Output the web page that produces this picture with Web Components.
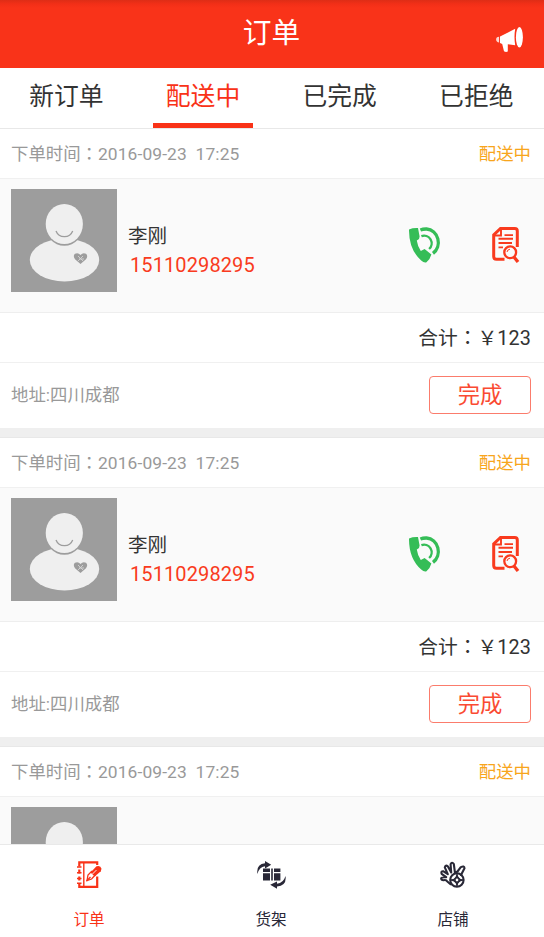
<!DOCTYPE html>
<html lang="zh-CN">
<head>
<meta charset="utf-8">
<title>订单</title>
<style>
html,body{margin:0;height:937px;overflow:hidden;background:#fff}
body{font-family:Roboto,"Noto Sans CJK SC",sans-serif;color:#333}
</style>
</head>
<body>
<order-app></order-app>
<script>
const define = (name, html) => customElements.define(name, class extends HTMLElement {
  constructor() {
    super();
    const t = document.createElement('template');
    t.innerHTML = html;
    this.attachShadow({mode: 'open'}).append(t.content.cloneNode(true));
  }
});

const icons = {
  horn: `<svg width="28" height="26" viewBox="0 0 28 26" fill="#fff"><path d="M4 9.5 19.2 1.8Q17.8 10 19.2 18.2L11.8 17.2V24.5Q10 25.5 8 24.3L6.2 17 4 16Z"/><path d="M3.1 9.8Q0 10 .1 12.6T3.1 15.6Z" opacity=".8"/><ellipse cx="23.4" cy="10.2" rx="3.5" ry="10.2"/></svg>`,
  phone: `<svg width="32" height="36" viewBox="0 0 32 36"><path d="M0 2.4Q4 .8 9 1.1L10.6 9.6 10 12 7.8 13.4Q8.4 18.5 11.8 24L15.6 22 22.4 27.6Q21.3 32 17.5 35.2Q15 36 12.2 33.5Q-.2 22.5 0 2.4Z" fill="#35bd57"/><g fill="none" stroke="#35bd57"><path d="M11.4 3Q14 1.9 17.6 2A12.8 13.5 0 0 1 24 26.4" stroke-width="3.3"/><path d="M12.4 9.2A7.6 7.6 0 0 1 20.1 22" stroke-width="2.3"/></g></svg>`,
  detail: `<svg width="28" height="36" viewBox="0 0 28 36" fill="none" stroke="#f93a1e"><path d="M25.3 20V4Q25.3 1.5 22.8 1.5H8.5L1.7 8V29.6Q1.7 32.3 4.5 32.3H12.5" stroke-width="3"/><path d="M9 2V8.5H2M12.5 8.1H21M6.5 11.8H21M6.5 16H20M6.5 20.4H11" stroke-width="1.9"/><circle cx="18.2" cy="25.3" r="5.9" stroke-width="2.3"/><path d="M22 30 26 35" stroke-width="3.3"/><path d="M15 25Q15.3 22.5 18 22.2" stroke-width="1"/></svg>`,
  orders: `<svg width="25" height="28" viewBox="0 0 25 28" fill="none" stroke="#f93217"><path d="M20.2 15.5V25.8H2.3V22M2.3 19.5V15.5M2.3 12.5V8.5M2.3 5.5V1.4H20.2V4" stroke-width="2.2"/><path d="M6.8 2V25M0 6H4.5M0 11.8H4.5M0 17.5H4.5M0 22.3H4.5" stroke-width="1.4"/><path d="M10 19.5 11 14 14.5 10.5 18 14.2 14.6 18Z" stroke-width="1.3"/><path d="M13.5 11.5 19.5 5.3Q23.5 3.8 24.5 7.8L23.8 10.2 17.7 15.5Z" fill="#f93217" stroke="none"/><path d="M15 13.5 19.5 9" stroke="#fff" stroke-width=".9"/><path d="M9.5 20 13.5 16" stroke-width="1.4"/></svg>`,
  shelf: `<svg width="29" height="28" viewBox="0 0 29 28" fill="#292837"><path d="M.4 13Q-.9 3 8 2.3V0L14.2 3.8 8 7.4V5.3Q2.2 6 .4 13ZM28.5 15Q29.9 25 20 25.5V27.7L13.2 23.7 20 20.5V22.7Q26.5 22 28.5 15Z"/><path d="M6 7.5H13V11H6ZM14.2 7.5H15.8V19.5H14.2ZM17 7.5H23.4V11H17ZM6 12.2H13V19.5H6ZM17 12.2H23.4V19.5H17Z"/></svg>`,
  shop: `<svg width="26" height="28" viewBox="0 0 26 28" fill="none" stroke="#292837" stroke-width="2.1" stroke-linecap="round" stroke-linejoin="round"><path d="M10.5 23.2 7 20.2Q6.5 18.6 3.5 19.2 1 19 1.2 17.2 1.7 16 6.2 16.2L1.6 12.8Q.8 9.8 3.5 10.3L7.8 13.2 4.8 6.4Q5.5 3.6 7.8 5.3L11.2 11.5 10.6 3.3Q12 .3 13.8 3L15 11.8 17.5 10.5 20.8 6.1Q24.4 4.5 24.5 7.2L21 14"/><circle cx="16.9" cy="18.9" r="6.7"/><path d="M17 13Q16.8 18.7 11 19 16.8 19.2 17 25 17.2 19.2 23 19 17.2 18.7 17 13Z" stroke-width="1.3"/><circle cx="17" cy="19" r="2.2" stroke-width="1.6"/></svg>`
};
for (const [k, v] of Object.entries(icons))
  define('icon-' + k, `<style>:host{display:block;line-height:0}svg{display:block}</style>${v}`);

define('title-bar', `<style>
:host{display:grid;grid-template-columns:1fr auto 1fr;height:68px;background:linear-gradient(#de2d16,#f22f17 4px,#f93319 8px);color:#fff}
.t{grid-column:2;font-size:28.7px;line-height:66px;margin-right:1px}
icon-horn{justify-self:end;margin:27px 20px 0 0}
</style><div class="t"><slot></slot></div><icon-horn></icon-horn>`);

define('tab-item', `<style>
:host{display:flex;flex-direction:column;align-items:center;width:136.67px;flex:none;height:60px;color:#333;font-size:24.8px;line-height:57px;box-sizing:border-box}
.l{height:55px}
:host([active]){color:#f93217}
:host([active]) i{width:100px;height:5px;background:#f93217}
</style><div class="l"><slot></slot></div><i></i>`);
define('tab-strip', `<style>:host{display:flex;height:60px;background:#fff;margin-left:-2px}</style><slot></slot>`);

define('user-avatar', `<style>:host{display:block;width:106px;height:103px}svg{display:block}</style>
<svg width="106" height="103" viewBox="0 0 106 103"><path d="M0 0H106V103H0Z" fill="#9d9d9d"/>
<ellipse cx="53.5" cy="71" rx="34.7" ry="21.5" fill="#efefef"/><ellipse cx="53.3" cy="35.2" rx="19.5" ry="21.6" fill="#9d9d9d"/><ellipse cx="53.3" cy="35" rx="18.6" ry="20" fill="#efefef"/>
<path d="M45 42Q47.2 47.6 53.3 47.7T61.7 42" fill="none" stroke="#9d9d9d" stroke-width="1.3"/>
<path d="M69.5 75 64 70.2Q61.6 66.5 64 64.8 67 63 69.5 66 72 63 75 64.8 77.4 67 75 70.2Z" fill="#9d9d9d"/><path d="M67 67 72 72M72 67 67 72M68 70H73" stroke="#d4d4d4" stroke-width=".9"/></svg>`);

define('done-button', `<style>:host{display:block}
button{display:block;width:102px;height:38px;box-sizing:border-box;padding:0;border:1.5px solid #fb7c6c;border-radius:4px;background:#fff;color:#fa4a32;font:22.3px/37px Roboto,"Noto Sans CJK SC",sans-serif}
</style><button><slot></slot></button>`);

define('order-card', `<style>
:host{display:block;border-top:1px solid #e8e8e8;border-bottom:9px solid #efefef;background:#fff}
:host([partial]) .rest,:host([partial]) .who,:host([partial]) icon-phone,:host([partial]) icon-detail{display:none}
.row{display:flex;justify-content:space-between;height:49px;line-height:49px;padding:0 13px 0 11px;border-bottom:1px solid #f0f0f0;white-space:pre}
.c{font-family:"Noto Sans CJK TC",sans-serif}
.time{color:#999;font-size:17.4px}
.time>:first-child{line-height:47px}
.time>.st{color:#f8a51c;line-height:50px}
.person{display:flex;height:133px;background:#fafafa;border-bottom:1px solid #eee}
user-avatar{margin:10px 0 0 11px}
.who{margin:43px 0 0 11px;flex:1}
.name{font-size:19.5px;line-height:30px}
.tel{font-size:20px;line-height:26px;color:#f93a20;letter-spacing:.1px;padding-left:2px}
icon-phone{margin:48px 51px 0 0}
icon-detail{margin:48px 24px 0 0}
.sum{justify-content:flex-end;font-size:19.8px;line-height:47px}
.n{letter-spacing:.1px}
.addr{height:65px;line-height:65px;align-items:flex-start;border:0;color:#999;font-size:17.4px}
done-button{margin-top:13px}
</style>
<div class="row time"><span>下单时间<span class="c" lang="zh-TW">：</span><span class="n">2016-09-23  17:25</span></span><span class="st">配送中</span></div>
<div class="person"><user-avatar></user-avatar><div class="who"><div class="name"><slot name="name"></slot></div><div class="tel"><slot name="tel"></slot></div></div><icon-phone></icon-phone><icon-detail></icon-detail></div>
<div class="rest"><div class="row sum"><span>合计<span class="c" lang="zh-TW">：</span>￥<span class="n">123</span></span></div>
<div class="row addr"><span><slot name="addr"></slot></span><done-button>完成</done-button></div></div>`);

define('nav-item', `<style>
:host{display:flex;flex-direction:column;align-items:center;flex:1;color:#292837;font-size:15.6px;line-height:24px;padding-top:16px}
:host([active]){color:#f93217}
.i{height:47px}
</style><div class="i"><slot name="icon"></slot></div><div><slot></slot></div>`);
define('nav-bar', `<style>:host{display:flex;height:92px;border-top:1px solid #e9e9e9;background:#fff;margin:0 0 0 -2px}</style><slot></slot>`);

const card = `<order-card><span slot="name">李刚</span><span slot="tel">15110298295</span><span slot="addr">地址:四川成都</span></order-card>`;
define('order-app', `<style>
:host{display:flex;flex-direction:column;width:544px;height:937px;overflow:hidden}
.list{flex:1;min-height:0;overflow:hidden}
</style>
<title-bar>订单</title-bar>
<tab-strip><tab-item>新订单</tab-item><tab-item active>配送中</tab-item><tab-item>已完成</tab-item><tab-item>已拒绝</tab-item></tab-strip>
<div class="list">${card}${card}<order-card partial></order-card></div>
<nav-bar><nav-item active><icon-orders slot="icon"></icon-orders>订单</nav-item><nav-item><icon-shelf slot="icon"></icon-shelf>货架</nav-item><nav-item><icon-shop slot="icon"></icon-shop>店铺</nav-item></nav-bar>`);
</script>
</body>
</html>
